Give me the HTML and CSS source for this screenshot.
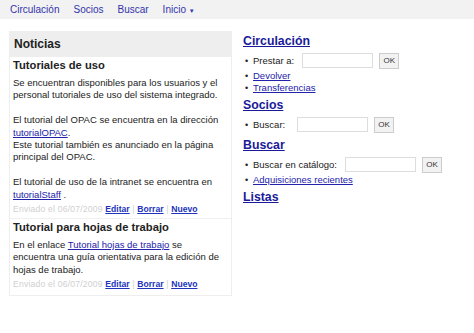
FILE: index.html
```html
<!DOCTYPE html>
<html lang="es">
  <head>
    <meta charset="UTF-8" />
    <title>Koha - Inicio</title>
    <link rel="stylesheet" href="styles.css">
  </head>
  <body>
    <nav class="topbar">
      <a href="#">Circulación</a>
      <a href="#">Socios</a>
      <a href="#">Buscar</a>
      <a href="#">Inicio <span class="flecha">&#9660;</span></a>
    </nav>

    <div class="contenido">
      <section class="noticias">
        <h1>Noticias</h1>
        <article class="noticia">
          <h2>Tutoriales de uso</h2>
          <p>Se encuentran disponibles para los usuarios y el personal tutoriales de uso del sistema integrado.</p>
          <p>El tutorial del OPAC se encuentra en la dirección <a href="#">tutorialOPAC</a>.<br>Este tutorial también es anunciado en la página principal del OPAC.</p>
          <p>El tutorial de uso de la intranet se encuentra en <a href="#">tutorialStaff</a> .</p>
          <div class="enviado">Enviado el 06/07/2009 <a href="#">Editar</a> | <a href="#">Borrar</a> | <a href="#">Nuevo</a></div>
        </article>
        <article class="noticia">
          <h2>Tutorial para hojas de trabajo</h2>
          <p>En el enlace <a href="#">Tutorial hojas de trabajo</a> se<br>encuentra una guía orientativa para la edición de hojas de trabajo.</p>
          <div class="enviado">Enviado el 06/07/2009 <a href="#">Editar</a> | <a href="#">Borrar</a> | <a href="#">Nuevo</a></div>
        </article>
      </section>

      <aside class="modulos">
        <h3><a href="#">Circulación</a></h3>
        <ul>
          <li><label>Prestar a:</label><input type="text"><button>OK</button></li>
          <li><a href="#">Devolver</a></li>
          <li><a href="#">Transferencias</a></li>
        </ul>
        <h3><a href="#">Socios</a></h3>
        <ul>
          <li><label class="ancho">Buscar:</label><input type="text"><button>OK</button></li>
        </ul>
        <h3><a href="#">Buscar</a></h3>
        <ul>
          <li><label>Buscar en catálogo:</label><input type="text"><button>OK</button></li>
          <li><a href="#">Adquisiciones recientes</a></li>
        </ul>
        <h3><a href="#">Listas</a></h3>
      </aside>
    </div>
  </body>
</html>
```

FILE: styles.css
```css
* {
  margin: 0;
  padding: 0;
  box-sizing: border-box;
}

body {
  font-family: "Liberation Sans", Arial, sans-serif;
  font-size: 9.5px;
  color: #222;
  background-color: white;
}

a {
  color: #2222aa;
}

.topbar {
  display: flex;
  gap: 14px;
  height: 19px;
  padding: 4px 10px;
  background-color: #f2f2f2;
}

.topbar a {
  color: #3333aa;
  font-size: 10px;
  text-decoration: none;
}

.flecha {
  font-size: 6px;
}

.contenido {
  display: flex;
  gap: 11px;
  padding: 12px 9px;
}

.noticias {
  width: 223px;
  flex-shrink: 0;
  border: 1px solid #eee;
  padding-bottom: 2px;
}

.noticias h1 {
  background-color: #eee;
  font-size: 12px;
  line-height: 15px;
  padding: 5px 4px;
  height: 25px;
}

.noticia {
  padding: 2px 3px 0;
  border-bottom: 1px solid #f0f0f0;
}

.noticia:last-child {
  border-bottom: none;
}

.noticia h2 {
  font-size: 11.2px;
  line-height: 13px;
  margin-bottom: 5px;
}

.noticia p {
  line-height: 12.4px;
  margin-bottom: 12.4px;
}

.noticia p:last-of-type {
  margin-bottom: 2px;
}

.enviado {
  font-size: 8.6px;
  letter-spacing: 0.2px;
  line-height: 13px;
  color: #d0d0d0;
  padding-bottom: 2px;
}

.enviado a {
  color: #2233bb;
  font-weight: bold;
  letter-spacing: 0;
}

.modulos {
  padding-top: 3px;
}

.modulos h3 {
  font-size: 12.3px;
  line-height: 14px;
  margin-bottom: 3px;
}

.modulos h3 a {
  color: #1a1a99;
}

.modulos ul {
  list-style: none;
  margin-bottom: 4px;
}

.modulos li {
  display: flex;
  align-items: center;
  line-height: 12px;
}

.modulos li::before {
  content: "•";
  width: 8px;
  padding-left: 2px;
  font-size: 9px;
}

.modulos li input {
  width: 71px;
  height: 15px;
  border: 1px solid #ddd;
  margin: 2px 6px 2px 8px;
}

.modulos li .ancho {
  width: 36px;
}

.modulos li button {
  font-family: "Liberation Sans", Arial, sans-serif;
  font-size: 8px;
  color: #333;
  width: 20px;
  height: 16px;
  background-color: #f2f2f2;
  border: 1px solid #ccc;
}
```
